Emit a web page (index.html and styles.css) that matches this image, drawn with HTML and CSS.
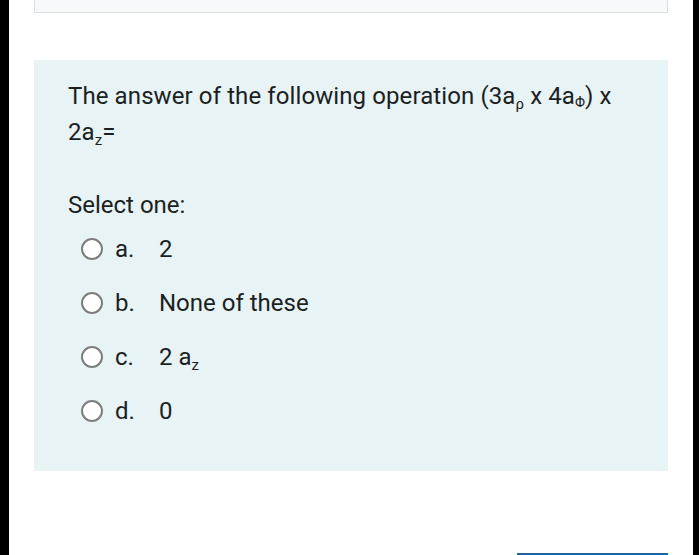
FILE: index.html
```html
<!DOCTYPE html>
<html>
<head>
<meta charset="utf-8">
<link rel="stylesheet" href="styles.css">
</head>
<body>
<div class="frame">
  <div class="bar bar-left"></div>
  <main class="content">
    <div class="top-card"></div>
    <section class="question">
      <p class="qtext">The answer of the following operation (3a<sub>ρ</sub> x 4a<sub class="phi">Φ</sub>) x 2a<sub>z</sub>=</p>
      <p class="prompt">Select one:</p>
      <div class="answers">
        <label class="option"><span class="radio"></span><span class="letter">a.</span><span class="val">2</span></label>
        <label class="option"><span class="radio"></span><span class="letter">b.</span><span class="val">None of these</span></label>
        <label class="option"><span class="radio"></span><span class="letter">c.</span><span class="val">2 a<sub>z</sub></span></label>
        <label class="option"><span class="radio"></span><span class="letter">d.</span><span class="val">0</span></label>
      </div>
    </section>
    <div class="footer">
      <div class="btn"></div>
    </div>
  </main>
  <div class="bar bar-right"></div>
</div>
</body>
</html>
```
FILE: styles.css
```css
html, body {
  margin: 0;
  padding: 0;
  background: #ffffff;
}
body {
  font-family: Roboto, "Noto Sans", sans-serif;
  color: #1b1f22;
  overflow: hidden;
}
.frame {
  display: flex;
  width: 699px;
  height: 555px;
  overflow: hidden;
}
.bar {
  background: #000;
  flex: none;
}
.bar-left { width: 9px; }
.bar-right { width: 6px; }
.content {
  flex: 1;
  min-width: 0;
  padding: 0 25px;
  display: flex;
  flex-direction: column;
}
.top-card {
  height: 12px;
  background: #f8f9fa;
  border: 1px solid #dde1e4;
  border-top: none;
  flex: none;
}
.question {
  margin-top: 47px;
  background: #e7f3f5;
  padding: 18px 34px 33px 34px;
  height: 411px;
  box-sizing: border-box;
  flex: none;
}
.qtext {
  margin: 0;
  font-size: 24px;
  line-height: 36px;
  letter-spacing: 0.1px;
}
sub {
  font-size: 15px;
  line-height: 0;
  vertical-align: -5px;
}
sub.phi {
  font-size: 14px;
  vertical-align: -3px;
}
.prompt {
  margin: 37px 0 0 0;
  font-size: 24px;
  line-height: 36px;
}
.answers {
  display: flex;
  flex-direction: column;
  margin-top: -1px;
}
.option {
  display: flex;
  align-items: center;
  height: 54px;
  font-size: 24px;
  padding-left: 13px;
}
.radio {
  width: 18px;
  height: 18px;
  border: 2px solid #7d7d7d;
  border-radius: 50%;
  background: #fff;
  flex: none;
  margin-right: 12px;
}
.letter {
  width: 44px;
  flex: none;
}
.footer {
  display: flex;
  justify-content: flex-end;
  margin-top: 82px;
}
.btn {
  width: 151px;
  height: 20px;
  background: #1d64a0;
}
```
